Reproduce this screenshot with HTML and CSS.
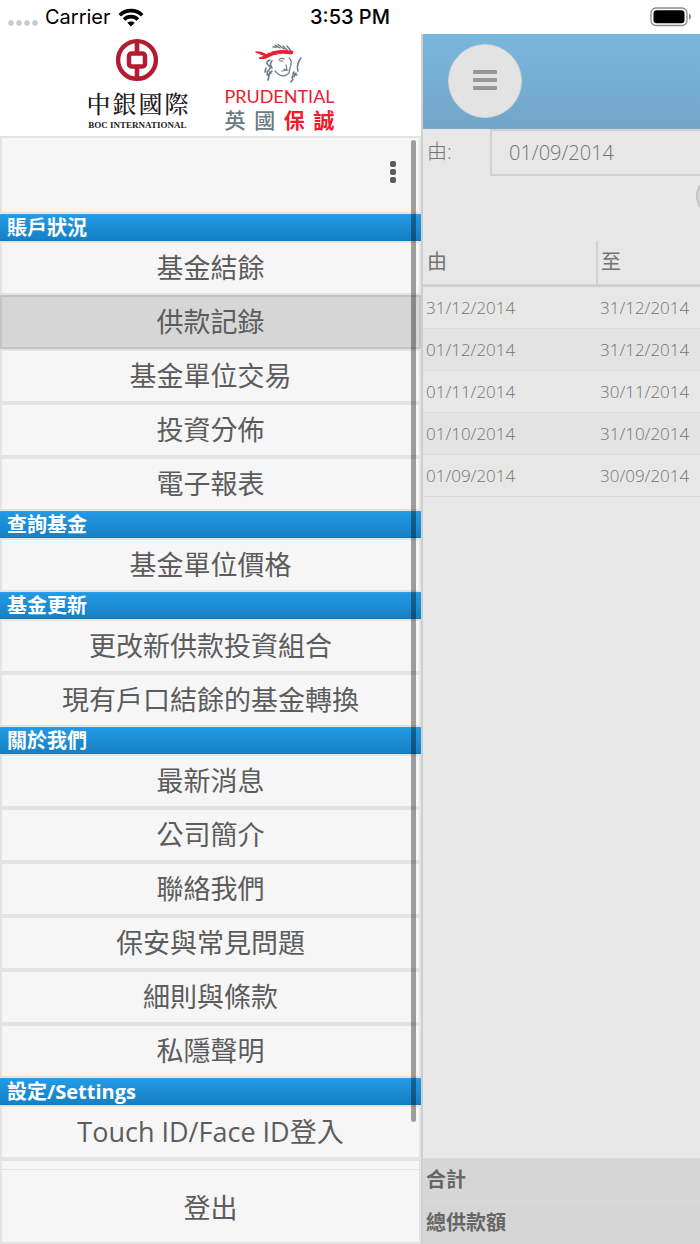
FILE: index.html
```html
<!DOCTYPE html>
<html lang="zh-Hant">
<head>
<meta charset="utf-8">
<meta name="viewport" content="width=device-width, initial-scale=1">
<title>供款記錄</title>
<link rel="stylesheet" href="styles.css">
</head>
<body>
<div class="statusbar">
  <div class="status-left">
    <svg class="signal" width="30" height="6" viewBox="0 0 30 6" fill="#c9c9c9"><circle cx="3" cy="3" r="2.8"/><circle cx="11" cy="3" r="2.8"/><circle cx="19" cy="3" r="2.8"/><circle cx="27" cy="3" r="2.8"/></svg>
    <span>Carrier</span>
    <svg width="26" height="19" viewBox="0 0 26 19" fill="none" stroke="#000" stroke-width="3.6"><path d="M1.8 7.2C8 1.1 18 1.1 24.200 7.200"/><path d="M6 11.500C9.900 7.700 16.100 7.700 20 11.500"/><path d="M13 18.500 9.300 14.800C11.400 12.900 14.600 12.900 16.700 14.800Z" fill="#000" stroke="none"/></svg>
  </div>
  <div class="status-time">3:53 PM</div>
  <div class="status-right">
    <svg width="42" height="20" viewBox="0 0 42 20"><rect x="1" y="1" width="36" height="17.500" rx="5" fill="none" stroke="#8c8c8c" stroke-width="1.300"/><rect x="3.500" y="3.300" width="31" height="13" rx="3" fill="#000"/><path d="M39 6.500C41.700 7.500 41.700 12 39 13Z" fill="#8c8c8c"/></svg>
  </div>
</div>
<div class="app">
  <aside class="sidebar">
    <div class="brands">
      <div class="boc">
        <svg width="44" height="44" viewBox="0 0 44 44" fill="none" stroke="#b31b30"><circle cx="22" cy="22" r="18.900" stroke-width="4.400"/><path d="M22 4V14M22 30V40" stroke-width="4.600"/><rect x="14" y="15.500" width="16" height="13" rx="2.500" stroke-width="4.500"/></svg>
        <div class="boc-cn"><span>中</span><span>銀</span><span>國</span><span>際</span></div>
        <div class="boc-en">BOC INTERNATIONAL</div>
      </div>
      <div class="pru">
        <svg width="50" height="42" viewBox="0 0 50 42" fill="none" stroke="#6b7a84" stroke-linecap="round">
          <path d="M20 3 25 6M23 2.500 29 7M28 4 33 9M32 4 37 10M18 5 22 5" stroke-width="1.300"/>
          <path d="M1 10Q6 9 11 12.500Q14 13 17 10Q26 7.500 38 9.500L37 12Q27 10 19 12.500Q13 16 9 13.500Q5 12 1 10ZM15 14Q10 18 4 16Q10 15 14 11Z" fill="#ed1b2e" stroke="#ed1b2e" stroke-width="1"/>
          <path d="M15 18Q10 20 13 23Q17 25 14 28Q10 31 14 34M17 19Q14 22 17 26M11 26 10 30M15 30 13 38M17 29 14 32M12 33 16 31" stroke-width="1.600"/>
          <path d="M24 18Q26 15.500 29 17M34 16Q37 18 36 22L34 31Q29 36 23 32L20 29M29 27Q33 30 31 23M27 29 33 28M25 19 28 19" stroke-width="1.200"/>
          <path d="M46 16Q41 22 43 29M38 31 42 33M39 30 37 36M38 37 36 40M41 31 39 35" stroke-width="1.500"/>
        </svg>
        <div class="pru-en">PRUDENTIAL</div>
        <div class="pru-cn"><span>英</span><span>國</span><b>保</b><b>誠</b></div>
      </div>
    </div>
    <nav class="menu">
      <div class="toolbar"><button class="more" type="button" aria-label="更多"><i></i><i></i><i></i></button></div>
      <h2>賬戶狀況</h2>
      <a class="item" href="#">基金結餘</a>
      <a class="item selected" href="#">供款記錄</a>
      <a class="item" href="#">基金單位交易</a>
      <a class="item" href="#">投資分佈</a>
      <a class="item" href="#">電子報表</a>
      <h2>查詢基金</h2>
      <a class="item" href="#">基金單位價格</a>
      <h2>基金更新</h2>
      <a class="item" href="#">更改新供款投資組合</a>
      <a class="item" href="#">現有戶口結餘的基金轉換</a>
      <h2>關於我們</h2>
      <a class="item" href="#">最新消息</a>
      <a class="item" href="#">公司簡介</a>
      <a class="item" href="#">聯絡我們</a>
      <a class="item" href="#">保安與常見問題</a>
      <a class="item" href="#">細則與條款</a>
      <a class="item" href="#">私隱聲明</a>
      <h2>設定/Settings</h2>
      <a class="item" href="#">Touch ID/Face ID登入</a>
      <div class="item"></div>
    </nav>
    <button class="logout" type="button">登出</button>
    <div class="scrollbar"></div>
  </aside>
  <main class="panel">
    <header class="topbar">
      <button class="burger" type="button" aria-label="選單"><i></i><i></i><i></i></button>
    </header>
    <div class="filter">
      <label for="from">由:</label>
      <input id="from" type="text" value="01/09/2014">
    </div>
    <div class="actions"><button class="round" type="button" aria-label="查詢"></button></div>
    <table class="records">
      <thead><tr><th>由</th><th>至</th></tr></thead>
      <tbody>
        <tr><td>31/12/2014</td><td>31/12/2014</td></tr>
        <tr><td>01/12/2014</td><td>31/12/2014</td></tr>
        <tr><td>01/11/2014</td><td>30/11/2014</td></tr>
        <tr><td>01/10/2014</td><td>31/10/2014</td></tr>
        <tr><td>01/09/2014</td><td>30/09/2014</td></tr>
      </tbody>
    </table>
    <footer class="totals"><div>合計</div><div>總供款額</div></footer>
  </main>
</div>
</body>
</html>
```

FILE: styles.css
```css
* { box-sizing: border-box; }
body {
  margin: 0;
  height: 100vh;
  display: flex;
  flex-direction: column;
  background: #fff;
  color: #5c5c5c;
  font-family: "Open Sans", "Noto Sans CJK TC", sans-serif;
}
button, input { font: inherit; color: inherit; margin: 0; }
.statusbar {
  flex: none;
  height: 34px;
  padding: 0 8px;
  display: grid;
  grid-template-columns: 1fr auto 1fr;
  align-items: center;
  color: #000;
  font: 500 20px/34px Inter, sans-serif;
}
.status-left { display: flex; align-items: center; gap: 7px; font-weight: 400; }
.signal { margin-top: 12px; }
.status-right { display: flex; justify-content: flex-end; }
.app {
  flex: 1;
  min-height: 0;
  display: grid;
  grid-template-columns: minmax(0, 421fr) minmax(0, 279fr);
  grid-template-rows: minmax(0, 1fr);
}
.sidebar { position: relative; display: flex; flex-direction: column; }
.brands {
  flex: none;
  height: 102px;
  padding-top: 4px;
  display: flex;
  justify-content: center;
  gap: 36px;
}
.boc, .pru { display: flex; flex-direction: column; align-items: center; white-space: nowrap; }
.boc { color: #1f1a1b; }
.boc-cn {
  display: flex;
  gap: 2px;
  margin-top: 6px;
  font: 500 24px/30px "Noto Serif CJK TC", "Noto Sans CJK TC", serif;
}
.boc-en { font: bold 9px/14px "Liberation Serif", serif; }
.pru { padding-top: 4px; }
.pru-en { color: #ed1b2e; font: 400 18px/24px Lato, sans-serif; }
.pru-cn {
  align-self: stretch;
  display: flex;
  justify-content: space-between;
  color: #6b7a84;
  font: 500 21px/22px "Noto Sans CJK TC", sans-serif;
}
.pru-cn b { color: #ed1b2e; font-weight: 700; }
.menu { flex: 1; min-height: 0; overflow-y: auto; scrollbar-width: none; background: #f6f6f6; }
.toolbar {
  height: 78px;
  padding: 0 17px 6px 0;
  border: 2px solid #e4e4e4;
  display: flex;
  align-items: center;
  justify-content: flex-end;
}
.more {
  width: 18px;
  padding: 0;
  border: 0;
  background: none;
  display: flex;
  flex-direction: column;
  align-items: center;
  gap: 2px;
}
.more i { width: 6px; height: 6px; border-radius: 2px; background: #5c5c5c; }
h2 {
  margin: 0;
  height: 27px;
  padding-left: 7px;
  border-top: 1px solid #2c9fe8;
  border-bottom: 1px solid #1478bb;
  background: linear-gradient(#229ae6, #1680c4);
  color: #fff;
  font-size: 20px;
  line-height: 26px;
  font-weight: 700;
}
.item {
  display: block;
  height: 54px;
  border: 2px solid #e3e3e3;
  color: #5c5c5c;
  font-size: 27px;
  line-height: 50px;
  text-align: center;
  text-decoration: none;
  white-space: nowrap;
}
.selected { background: #d6d6d6; border-color: #c4c4c4; }
.logout {
  flex: none;
  height: 75px;
  border: 2px solid #e3e3e3;
  border-top-width: 1px;
  background: #f6f6f6;
  font-size: 27px;
}
.scrollbar {
  position: absolute;
  top: 106px;
  right: 5px;
  bottom: 122px;
  width: 5px;
  border-radius: 3px;
  background: rgba(0, 0, 0, 0.36);
}
.panel {
  display: flex;
  flex-direction: column;
  overflow: hidden;
  border-left: 2px solid #cfcfcf;
  background: #e7e7e7;
  color: #737373;
}
.topbar {
  flex: none;
  height: 95px;
  padding-left: 25px;
  display: flex;
  align-items: center;
  border-bottom: 1px solid #80a9c4;
  background: linear-gradient(#79b6dd, #72a6c9);
}
.burger {
  width: 74px;
  height: 74px;
  padding: 0 0 2px;
  border: 1px solid #d2d2d2;
  border-radius: 50%;
  background: #e3e3e3;
  display: flex;
  flex-direction: column;
  align-items: center;
  justify-content: center;
  gap: 4px;
}
.burger i { width: 24px; height: 4px; border-radius: 1px; background: #979797; }
.filter { flex: none; display: flex; height: 47px; font-size: 20px; font-weight: 300; }
.filter label { flex: 0 0 67px; padding-left: 4px; line-height: 46px; }
.filter input {
  flex: 1;
  min-width: 0;
  padding: 0 17px;
  border: 2px solid #d0d0d0;
  border-right: 0;
  border-radius: 0;
  background: transparent;
}
.actions { flex: none; height: 65px; display: flex; justify-content: flex-end; }
.round {
  flex: none;
  width: 40px;
  height: 40px;
  margin-right: -36px;
  border: 2px solid #c6c6c6;
  border-radius: 50%;
  background: #d9d9d9;
}
.records { width: 100%; table-layout: fixed; border-collapse: separate; border-spacing: 0; }
th, td { text-align: left; white-space: nowrap; overflow: hidden; }
th:first-child { width: 173px; }
th { height: 46px; padding: 0 4px 4px; font-size: 20px; font-weight: 400; border-bottom: 3px solid #cfcfcf; }
th + th { border-left: 2px solid #d0d0d0; padding-left: 3px; }
td { height: 42px; padding: 0 3px; font-size: 17px; font-weight: 300; border-bottom: 1px solid #dadada; }
td + td { padding-left: 4px; }
tbody tr:nth-child(even) { background: #e3e3e3; }
.totals { margin-top: auto; color: #666; font-size: 20px; font-weight: 700; }
.totals div { height: 43px; padding-left: 3px; line-height: 41px; background: #d6d6d6; border-top: 1px solid #dcdcdc; }
```
